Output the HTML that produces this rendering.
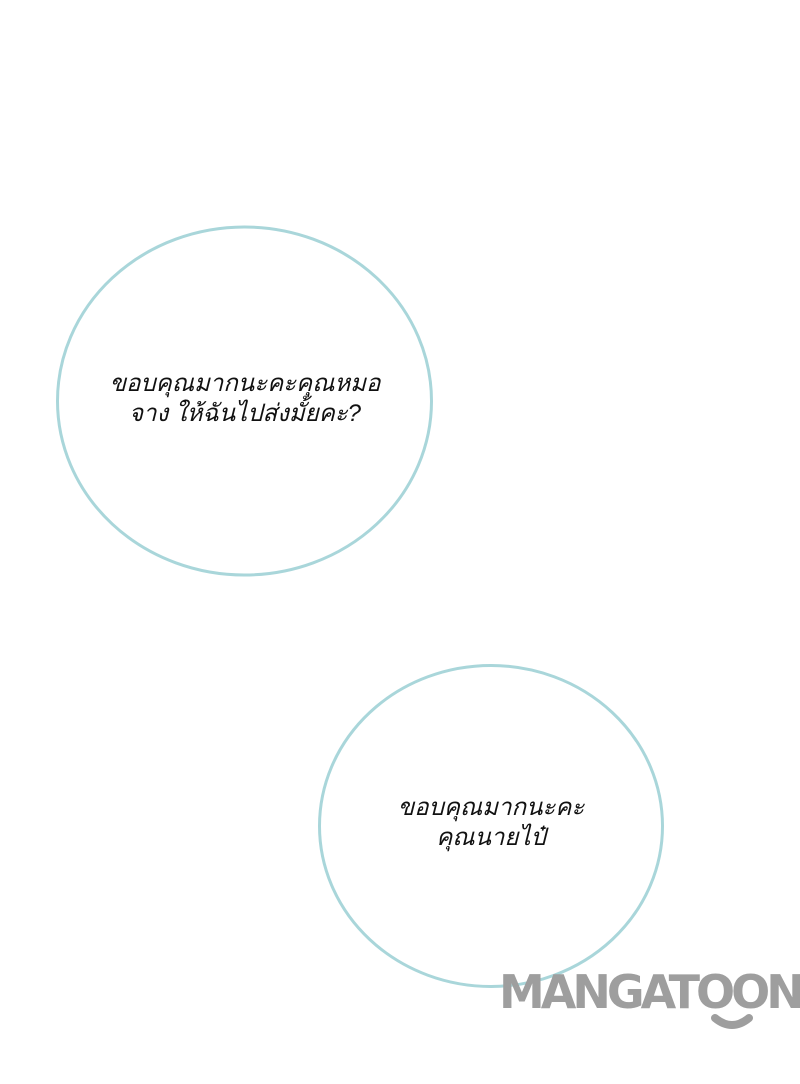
<!DOCTYPE html>
<html><head><meta charset="utf-8"><style>
html,body{margin:0;padding:0;background:#fff;}
body{width:800px;height:1084px;position:relative;overflow:hidden;font-family:"Liberation Sans",sans-serif;}
.t{position:absolute;text-align:center;font-size:24px;line-height:30px;color:#111;font-style:italic;}
.wm{position:absolute;left:499px;top:965px;font-family:"DejaVu Sans","Liberation Sans",sans-serif;font-weight:bold;font-size:46px;color:#9e9e9e;letter-spacing:-4px;white-space:nowrap;}
</style></head><body>
<svg width="800" height="1084" style="position:absolute;left:0;top:0">
<ellipse cx="244.5" cy="401" rx="187" ry="174" fill="none" stroke="#a9d6da" stroke-width="3"/>
<ellipse cx="491" cy="826" rx="171.5" ry="160.5" fill="none" stroke="#a9d6da" stroke-width="3"/>
<path d="M715 1018 Q732 1032 749 1018" fill="none" stroke="#9e9e9e" stroke-width="8" stroke-linecap="round"/>
</svg>
<div class="t" style="left:55px;width:380px;top:369px">ขอบคุณมากนะคะคุณหมอ<br>จาง ให้ฉันไปส่งมั้ยคะ?</div>
<div class="t" style="left:316px;width:350px;top:793px">ขอบคุณมากนะคะ<br>คุณนายไป๋</div>
<div class="wm">MANGATOON</div>
</body></html>
